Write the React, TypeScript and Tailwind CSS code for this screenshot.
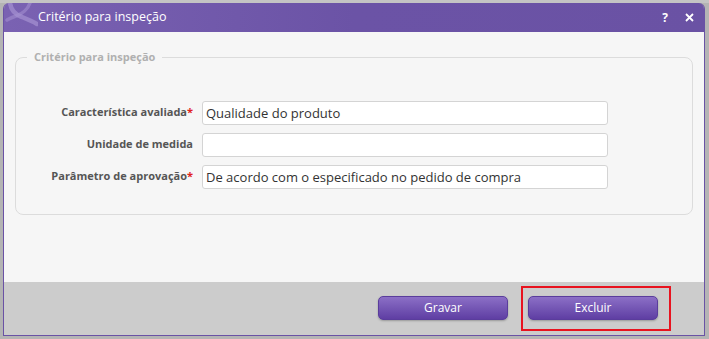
import React from 'react';

const font = { fontFamily: '"Open Sans", "Noto Sans", sans-serif' };

const Field: React.FC<{ label: string; required?: boolean; value?: string }> = ({ label, required, value }) => (
    <div className="flex items-center h-[24px]">
        <label className="w-[179px] pr-[9px] text-right text-[11px] font-bold text-[#555] whitespace-nowrap">
            {label}
            {required && <span className="text-[#e02020]">*</span>}
        </label>
        <input
            readOnly
            value={value ?? ''}
            className="w-[406px] h-[24px] bg-white border border-[#d4d4d4] rounded-[3px] px-[3px] text-[13px] text-[#333] outline-none"
        />
    </div>
);

export default function App() {
    return (
        <div className="w-[709px] h-[339px] bg-[#b4b4b4] relative overflow-hidden" style={font}>
            <div className="absolute left-0 top-0 w-[709px] h-[3px] bg-[#c4c4c4]"></div>
            <div className="absolute left-[3px] top-[3px] w-[702px] h-[333px] flex flex-col rounded-t-[6px] overflow-hidden border-x border-b border-[#6a52a5]">
                {/* title bar */}
                <div className="h-[29px] shrink-0 flex items-center bg-gradient-to-r from-[#7a62b2] via-[#6b53a6] to-[#6a52a4] relative">
                    <svg className="absolute left-0 top-0" width="34" height="24" viewBox="0 0 34 24">
                        <path d="M6 0 C 7 7, 12 12, 18 14 C 23 16, 28 18, 33 21" stroke="#a592d2" strokeWidth="4.5" fill="none" strokeLinecap="round" opacity="0.7" />
                        <path d="M26 0 C 24 6, 18 11, 12 13 C 9 14, 6 15, 3 17" stroke="#a592d2" strokeWidth="3.5" fill="none" strokeLinecap="round" opacity="0.55" />
                    </svg>
                    <span className="ml-[34px] text-white text-[12.5px]">Critério para inspeção</span>
                    <div className="ml-auto flex items-center gap-[17px] mr-[10px] text-white">
                        <span className="text-[12px] font-bold">?</span>
                        <svg width="9" height="9" viewBox="0 0 9 9">
                            <path d="M1 1 L8 8 M8 1 L1 8" stroke="white" strokeWidth="1.8" />
                        </svg>
                    </div>
                </div>
                {/* body */}
                <div className="flex-1 bg-[#f6f6f6] px-[11px] pt-[17px]">
                    <fieldset className="border border-[#dcdcdc] rounded-[8px] h-[166px] pl-[7px] pt-[35px] m-0">
                        <legend className="ml-[4px] px-[7px] text-[11px] font-bold text-[#b0b0b0]">Critério para inspeção</legend>
                        <div className="flex flex-col gap-[8px]">
                            <Field label="Característica avaliada" required value="Qualidade do produto" />
                            <Field label="Unidade de medida" />
                            <Field label="Parâmetro de aprovação" required value="De acordo com o especificado no pedido de compra" />
                        </div>
                    </fieldset>
                </div>
                {/* footer */}
                <div className="h-[53px] shrink-0 bg-[#cccccc] flex items-center justify-end gap-[20px] pr-[46px] pb-[2px]">
                    <button className="w-[130px] h-[24px] rounded-[5px] bg-gradient-to-b from-[#8c6fc6] to-[#5f3ea3] border border-[#5a3d9c] text-white text-[12px] shadow-[0_1px_2px_rgba(0,0,0,0.25)]">
                        Gravar
                    </button>
                    <button className="w-[130px] h-[24px] rounded-[5px] bg-gradient-to-b from-[#8c6fc6] to-[#5f3ea3] border border-[#5a3d9c] text-white text-[12px] shadow-[0_1px_2px_rgba(0,0,0,0.25)]">
                        Excluir
                    </button>
                </div>
            </div>
            {/* highlight */}
            <div className="absolute left-[521px] top-[286px] w-[150px] h-[45px] border-2 border-[#e8131f]"></div>
        </div>
    );
}
